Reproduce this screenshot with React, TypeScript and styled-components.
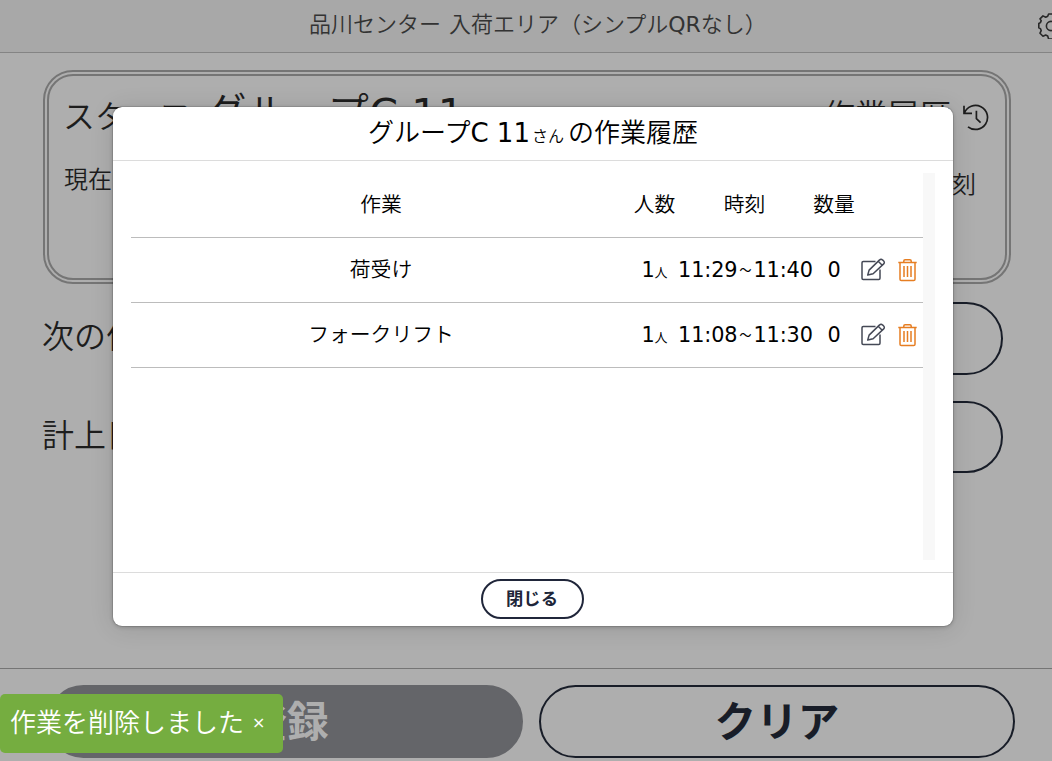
import React from 'react';
import styled, { createGlobalStyle } from 'styled-components';

const GlobalStyle = createGlobalStyle`
  * { box-sizing: border-box; }
  body {
    margin: 0;
    overflow: hidden;
    background: #aeaeae;
    color: #1d1d1d;
    font-family: 'Noto Sans CJK JP', sans-serif;
    font-weight: 350;
  }
  button { font-family: inherit; padding: 0; }
`;

const Page = styled.div`
  width: 1052px;
  height: 761px;
  display: flex;
  flex-direction: column;
  position: relative;
  overflow: hidden;
`;

const Header = styled.header`
  height: 53px;
  flex: none;
  display: grid;
  grid-template-columns: 309px 1fr 14px;
  background: #a8a8a8;
  border-bottom: 1px solid #848484;
  color: #333;
`;

const HeaderTitle = styled.div`
  grid-column: 2;
  font-size: 22px;
  line-height: 44px;
  word-spacing: 3px;
  white-space: pre;
`;

const GearSlot = styled.div`
  padding-top: 13px;
  overflow: visible;
  svg { display: block; }
`;

const Latin = styled.span<{ $spacing?: number }>`
  font-family: 'DejaVu Sans', sans-serif;
  font-weight: 400;
  letter-spacing: ${(p) => p.$spacing ?? 0}px;
`;

const Main = styled.main`
  flex: 1;
  padding: 17px 41px 0 43px;
`;

const StatusCard = styled.section`
  height: 214px;
  border: 6px double #757575;
  border-radius: 30px;
  padding: 10px 15px;
`;

const CardRow = styled.div<{ $size: number; $height: number }>`
  display: flex;
  justify-content: space-between;
  align-items: center;
  height: ${(p) => p.$height}px;
  font-size: ${(p) => p.$size}px;
  line-height: 1;
`;

const Staff = styled.div`
  margin-left: -1px;
`;

const StaffName = styled.span`
  font-size: 41.6px;
  margin-left: 14px;
`;

const HistoryLink = styled.div`
  display: flex;
  align-items: center;
  gap: 11px;
  padding-top: 2px;
  svg { margin-top: 10px; }
`;

const Times = styled.span`
  padding: 10px 14px 0 0;
`;

const FormRow = styled.div<{ $gap: number; $height: number }>`
  display: flex;
  align-items: center;
  height: ${(p) => p.$height}px;
  margin-top: ${(p) => p.$gap}px;
  padding-right: 8px;
  font-size: 32px;
  line-height: 1;
`;

const FormLabel = styled.span`
  width: 160px;
  margin-left: -1px;
  padding-bottom: 9px;
`;

const FormField = styled.div`
  flex: 1;
  height: 100%;
  border: 2px solid #181d28;
  border-radius: 37px;
`;

const Footer = styled.footer`
  height: 93px;
  flex: none;
  border-top: 1px solid #757575;
  padding: 16px 37px 0 47px;
  display: flex;
  gap: 16px;
`;

const ActionButton = styled.button<{ $filled?: boolean }>`
  flex: none;
  width: 476px;
  height: 73px;
  border-radius: 37px;
  border: 2px solid ${(p) => (p.$filled ? '#646569' : '#181d28')};
  background: ${(p) => (p.$filled ? '#646569' : 'transparent')};
  color: ${(p) => (p.$filled ? '#aeaeae' : '#181d28')};
  font-size: 41.6px;
  font-weight: 700;
  line-height: 65px;
  padding: 0 0 4px ${(p) => (p.$filled ? 4 : 0)}px;
`;

const Dialog = styled.div`
  position: absolute;
  left: 113px;
  top: 107px;
  width: 840px;
  height: 519px;
  display: flex;
  flex-direction: column;
  background: #fff;
  color: #000;
  border-radius: 9px;
  box-shadow: 0 0 0 1px rgba(0, 0, 0, 0.1), 0 1px 4px rgba(0, 0, 0, 0.2), 0 2px 24px rgba(0, 0, 0, 0.12);
`;

const DialogTitle = styled.div`
  height: 54px;
  border-bottom: 1px solid #dcdcdc;
  text-align: center;
  font-size: 26px;
  line-height: 48px;
`;

const Honorific = styled.span`
  font-size: 16px;
  margin: 0 4px 0 2px;
`;

const DialogBody = styled.div`
  flex: 1;
  display: flex;
  padding: 12px 18px;
`;

const Table = styled.div`
  width: 792px;
`;

const ScrollTrack = styled.div`
  width: 12px;
  background: #f8f8f8;
`;

const Row = styled.div`
  display: grid;
  grid-template-columns: 500px 47px 133px 46px 66px;
  height: 65px;
  border-bottom: 1px solid #bcbcbc;
  font-size: 20.8px;
  line-height: 61px;
  text-align: center;
  white-space: nowrap;
`;

const Small = styled.span`
  font-size: 13px;
`;

const Tilde = styled.span`
  display: inline-block;
  width: 16px;
  height: 61px;
  vertical-align: top;
  font-size: 25px;
  font-weight: 300;
  text-align: center;
`;

const Tools = styled.div`
  display: flex;
  align-items: center;
  gap: 12px;
  padding-left: 4px;
  svg { display: block; }
`;

const DialogFooter = styled.div`
  height: 54px;
  border-top: 1px solid #dcdcdc;
  display: flex;
  justify-content: center;
  padding-top: 6px;
`;

const CloseButton = styled.button`
  width: 103px;
  height: 40px;
  margin-left: -1px;
  border: 2px solid #20263a;
  border-radius: 20px;
  background: #fff;
  color: #20263a;
  font-size: 17.3px;
  font-weight: 700;
  line-height: 34px;
  padding: 0 1px 2px 0;
`;

const Toast = styled.div`
  position: absolute;
  left: 0;
  top: 694px;
  width: 283px;
  height: 59px;
  display: flex;
  gap: 8px;
  padding-left: 10px;
  border-radius: 5px;
  background: #75ad40;
  color: #fff;
  font-size: 26px;
  line-height: 53px;
`;

const ToastClose = styled.span`
  font-family: 'DejaVu Sans', sans-serif;
  font-weight: 400;
  font-size: 16px;
  line-height: 57px;
`;

const GearIcon = () => (
  <svg width="26" height="26" viewBox="0 0 26 26" fill="none" stroke="#292929" strokeWidth="1.6" strokeLinejoin="round">
    <path d="M10.6 1h4.8l.9 2.6 2 .9 2.7-1.1 3 3-1.2 2.6.8 2 2.4.9v4.2l-2.4.9-.8 2 1.2 2.6-3 3-2.7-1.1-2 .9-.9 1.6h-4.8L9.7 23l-2-.9-2.7 1.1-3-3 1.2-2.6-.8-2-1.6-.9v-4.2l1.6-.9.8-2L2 5.9l3-3 2.7 1.3 2-.9z" />
    <circle cx="13" cy="13" r="4.6" />
  </svg>
);

const HistoryIcon = () => (
  <svg width="28" height="28" viewBox="0 0 28 28" fill="none" stroke="#1d1d1d" strokeWidth="1.7">
    <path d="M2 1.8v7.6h8M2.3 9.2A12 12 0 1 1 6 22.8" />
    <path d="M14.4 6.8v7.8l4.2 4" />
  </svg>
);

const EditIcon = () => (
  <svg width="25" height="24" viewBox="0 0 25 24" fill="none" stroke="#454956" strokeWidth="1.5" strokeLinejoin="round">
    <path d="M14.5 3.5H2.2Q1 3.5 1 4.7v15.6Q1 21.5 2.2 21.5h15.6q1.2 0 1.2-1.2V11.5" />
    <path d="M6.7 17.1l1.4-5L18.6 1.9a2 2 0 0 1 2.9 0l1.2 1.1a2 2 0 0 1 0 2.9L12.1 15.7zM17.2 3.3l4 3.9" />
  </svg>
);

const TrashIcon = () => (
  <svg width="19" height="23" viewBox="0 0 19 23" fill="none" stroke="#e67e22" strokeWidth="1.5">
    <path d="M.3 3.6h18.4M2 3.6v16.6Q2 21.5 3.3 21.5h12.4q1.3 0 1.3-1.3V3.6M5.8 3.5V2.1Q5.8.8 7.1.8h4.8q1.3 0 1.3 1.3v1.4M6 7v11M9.5 7v11M13 7v11" />
  </svg>
);

const records = [
  { task: '荷受け', people: '1', start: '11:29', end: '11:40', count: '0' },
  { task: 'フォークリフト', people: '1', start: '11:08', end: '11:30', count: '0' },
];

export default function App() {
  return (
    <>
      <GlobalStyle />
      <Page>
        <Header>
          <HeaderTitle>品川センター 入荷エリア（シンプル<Latin>QR</Latin>なし）</HeaderTitle>
          <GearSlot><GearIcon /></GearSlot>
        </Header>
        <Main>
          <StatusCard>
            <CardRow $size={32} $height={52}>
              <Staff>スタッフ<StaffName>グループ<Latin>C 11</Latin></StaffName></Staff>
              <HistoryLink>作業履歴<HistoryIcon /></HistoryLink>
            </CardRow>
            <CardRow $size={24} $height={80}>
              <span>現在の作業</span>
              <Times>開始時刻</Times>
            </CardRow>
          </StatusCard>
          <FormRow $gap={18} $height={73}><FormLabel>次の作業</FormLabel><FormField /></FormRow>
          <FormRow $gap={26} $height={72}><FormLabel>計上日</FormLabel><FormField /></FormRow>
        </Main>
        <Footer>
          <ActionButton $filled>登録</ActionButton>
          <ActionButton>クリア</ActionButton>
        </Footer>
        <Dialog role="dialog">
          <DialogTitle>グループ<Latin>C 11</Latin><Honorific>さん</Honorific>の作業履歴</DialogTitle>
          <DialogBody>
            <Table>
              <Row>
                <div>作業</div><div>人数</div><div>時刻</div><div>数量</div>
              </Row>
              {records.map((r) => (
                <Row key={r.task}>
                  <div>{r.task}</div>
                  <div><Latin>{r.people}</Latin><Small>人</Small></div>
                  <div><Latin $spacing={-0.1}>{r.start}</Latin><Tilde>~</Tilde><Latin $spacing={-0.1}>{r.end}</Latin></div>
                  <div><Latin>{r.count}</Latin></div>
                  <Tools><EditIcon /><TrashIcon /></Tools>
                </Row>
              ))}
            </Table>
            <ScrollTrack />
          </DialogBody>
          <DialogFooter><CloseButton>閉じる</CloseButton></DialogFooter>
        </Dialog>
        <Toast>作業を削除しました<ToastClose>×</ToastClose></Toast>
      </Page>
    </>
  );
}
